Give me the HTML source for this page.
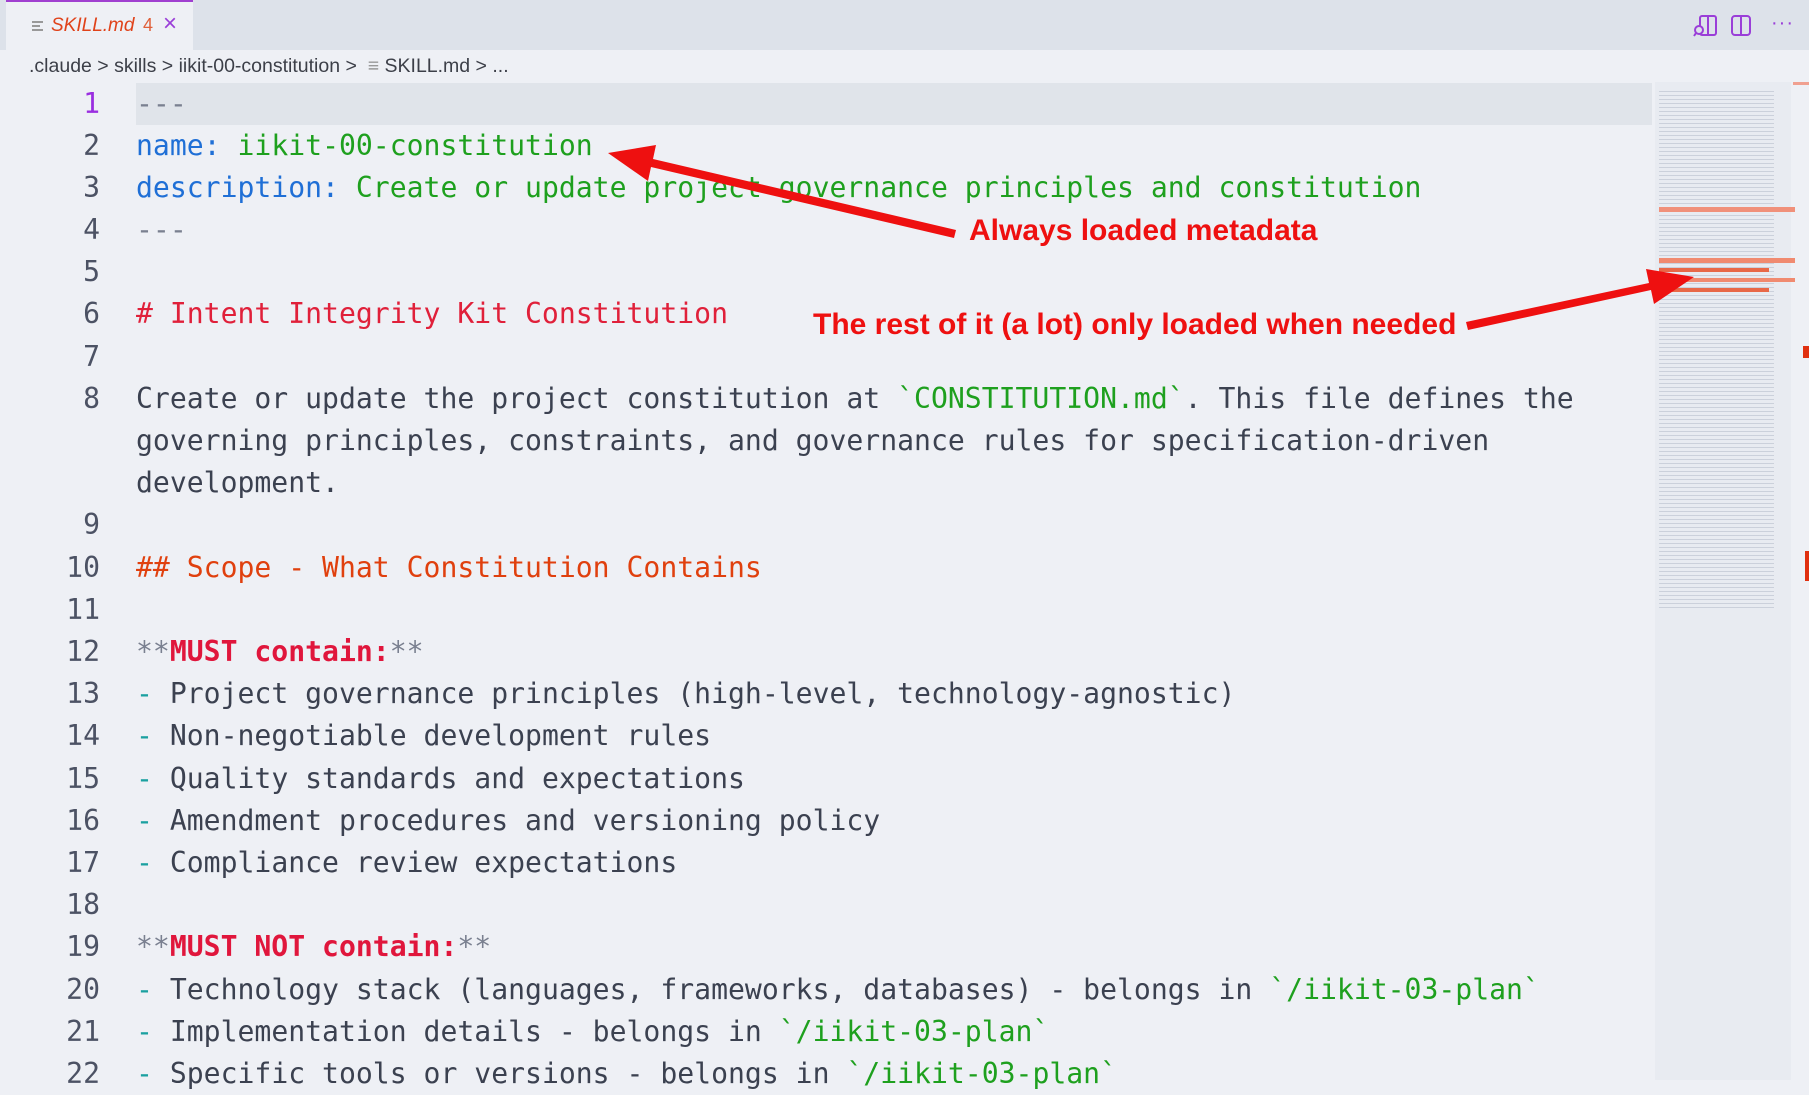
<!DOCTYPE html>
<html><head><meta charset="utf-8"><style>
*{margin:0;padding:0;box-sizing:border-box}
body{width:1809px;height:1080px;overflow:hidden;background:#eef0f5;position:relative;font-family:"Liberation Sans",sans-serif}
.tabbar{position:absolute;left:0;top:0;width:1809px;height:50px;background:#dde2ea}
.tab{position:absolute;left:6px;top:0;width:187px;height:50px;background:#eef0f5;border-top:2px solid #a040d0}
.tab .ic{position:absolute;left:26px;top:19px;width:11px;height:10px;border-top:2px solid #999;border-bottom:2px solid #999}
.tab .ic:after{content:"";position:absolute;left:0;top:2px;width:8px;height:2px;background:#999}
.tab .t{position:absolute;left:45px;top:13px;font-size:19px;font-style:italic;color:#e0421a}
.tab .n{position:absolute;left:137px;top:13px;font-size:18px;color:#e0603a}
.tab .x{position:absolute;left:157px;top:8px;font-size:24px;color:#9a3ed8}
.bc{position:absolute;left:29px;top:55px;font-size:19.5px;color:#3c3f48;white-space:pre}
.hl{position:absolute;left:136px;top:83px;width:1516px;height:42px;background:#e0e4ea}
.code{position:absolute;left:0;top:1px;font-family:"DejaVu Sans Mono","Liberation Mono",monospace;font-size:28.1px;color:#3b4150;white-space:pre}
.r{position:absolute;left:136px;height:42px;line-height:42px}
.ln{position:absolute;width:100px;text-align:right;height:42px;line-height:42px;color:#4c5264;left:0}
.k{color:#1f6fd6}.g{color:#1ea01e}.h{color:#e0203a}.h2{color:#e0400e}.b{color:#e0163c;font-weight:bold}.s{color:#7a8090}.d{color:#1aa0a0}
.mini{position:absolute;left:1655px;top:82px;width:136px;height:998px;background:#e8ebf1}
.ann{position:absolute;font-weight:bold;color:#ee1010;font-size:30px;white-space:nowrap}
</style></head><body>
<div class="tabbar">
 <div class="tab"><div class="ic"></div><span class="t">SKILL.md</span><span class="n">4</span><span class="x">×</span></div>
 <svg style="position:absolute;left:1693px;top:13px" width="26" height="26" viewBox="0 0 26 26" fill="none" stroke="#9a3ed8" stroke-width="2"><rect x="7" y="3" width="16" height="19" rx="2"/><line x1="15" y1="3" x2="15" y2="22"/><circle cx="6" cy="17" r="4" fill="#dde2ea"/><line x1="3" y1="20" x2="1" y2="23"/></svg>
 <svg style="position:absolute;left:1729px;top:13px" width="24" height="24" viewBox="0 0 24 24" fill="none" stroke="#9a3ed8" stroke-width="2"><rect x="3" y="3" width="18" height="19" rx="3"/><line x1="12" y1="3" x2="12" y2="22"/></svg>
 <div style="position:absolute;left:1771px;top:12px;font-size:20px;color:#9a3ed8;letter-spacing:1px">···</div>
</div>
<div class="bc">.claude &gt; skills &gt; iikit-00-constitution &gt;  <span style="color:#999">≡</span> SKILL.md &gt; ...</div>
<div class="hl"></div>
<div class="code">
<div class="ln" style="top:82px;color:#9a2ee0">1</div><div class="r" style="top:82px"><span class="s">---</span></div>
<div class="ln" style="top:124px">2</div><div class="r" style="top:124px"><span class="k">name:</span> <span class="g">iikit-00-constitution</span></div>
<div class="ln" style="top:166px">3</div><div class="r" style="top:166px"><span class="k">description:</span> <span class="g">Create or update project governance principles and constitution</span></div>
<div class="ln" style="top:208px">4</div><div class="r" style="top:208px"><span class="s">---</span></div>
<div class="ln" style="top:250px">5</div>
<div class="ln" style="top:292px">6</div><div class="r" style="top:292px"><span class="h"># Intent Integrity Kit Constitution</span></div>
<div class="ln" style="top:335px">7</div>
<div class="ln" style="top:377px">8</div><div class="r" style="top:377px">Create or update the project constitution at <span class="g">`CONSTITUTION.md`</span>. This file defines the</div>
<div class="r" style="top:419px">governing principles, constraints, and governance rules for specification-driven</div>
<div class="r" style="top:461px">development.</div>
<div class="ln" style="top:503px">9</div>
<div class="ln" style="top:546px">10</div><div class="r" style="top:546px"><span class="h2">## Scope - What Constitution Contains</span></div>
<div class="ln" style="top:588px">11</div>
<div class="ln" style="top:630px">12</div><div class="r" style="top:630px"><span class="s">**</span><span class="b">MUST contain:</span><span class="s">**</span></div>
<div class="ln" style="top:672px">13</div><div class="r" style="top:672px"><span class="d">-</span> Project governance principles (high-level, technology-agnostic)</div>
<div class="ln" style="top:714px">14</div><div class="r" style="top:714px"><span class="d">-</span> Non-negotiable development rules</div>
<div class="ln" style="top:757px">15</div><div class="r" style="top:757px"><span class="d">-</span> Quality standards and expectations</div>
<div class="ln" style="top:799px">16</div><div class="r" style="top:799px"><span class="d">-</span> Amendment procedures and versioning policy</div>
<div class="ln" style="top:841px">17</div><div class="r" style="top:841px"><span class="d">-</span> Compliance review expectations</div>
<div class="ln" style="top:883px">18</div>
<div class="ln" style="top:925px">19</div><div class="r" style="top:925px"><span class="s">**</span><span class="b">MUST NOT contain:</span><span class="s">**</span></div>
<div class="ln" style="top:968px">20</div><div class="r" style="top:968px"><span class="d">-</span> Technology stack (languages, frameworks, databases) - belongs in <span class="g">`/iikit-03-plan`</span></div>
<div class="ln" style="top:1010px">21</div><div class="r" style="top:1010px"><span class="d">-</span> Implementation details - belongs in <span class="g">`/iikit-03-plan`</span></div>
<div class="ln" style="top:1052px">22</div><div class="r" style="top:1052px"><span class="d">-</span> Specific tools or versions - belongs in <span class="g">`/iikit-03-plan`</span></div>
</div>
<div class="mini">
 <div style="position:absolute;left:4px;top:6px;width:115px;height:520px;background:repeating-linear-gradient(#e8ebf1 0 3px,#b8bfcc 3px 4px);opacity:.6"></div>
 <div style="position:absolute;left:4px;top:125px;width:136px;height:5px;background:#f0907a"></div>
 <div style="position:absolute;left:4px;top:176px;width:136px;height:5px;background:#f08a70"></div>
 <div style="position:absolute;left:4px;top:186px;width:110px;height:4px;background:#e86848"></div>
 <div style="position:absolute;left:4px;top:196px;width:136px;height:4px;background:#f08a70"></div>
 <div style="position:absolute;left:4px;top:206px;width:110px;height:4px;background:#e86848"></div>
</div>
<div style="position:absolute;left:1793px;top:82px;width:16px;height:3px;background:#f0a090"></div>
<div style="position:absolute;left:1803px;top:346px;width:6px;height:12px;background:#e03010"></div>
<div style="position:absolute;left:1805px;top:551px;width:4px;height:30px;background:#e03010"></div>
<svg style="position:absolute;left:0;top:0" width="1809" height="1080">
 <polygon points="956,230 653,159 656,145 608,153 648,181 651,167 954,238" fill="#ee1010"/>
 <polygon points="1466,322 1649,283 1646,269 1694,277 1654,304 1651,290 1468,330" fill="#ee1010"/>
</svg>
<div class="ann" style="left:969px;top:214px">Always loaded metadata</div>
<div class="ann" style="left:813px;top:308px">The rest of it (a lot) only loaded when needed</div>
</body></html>
